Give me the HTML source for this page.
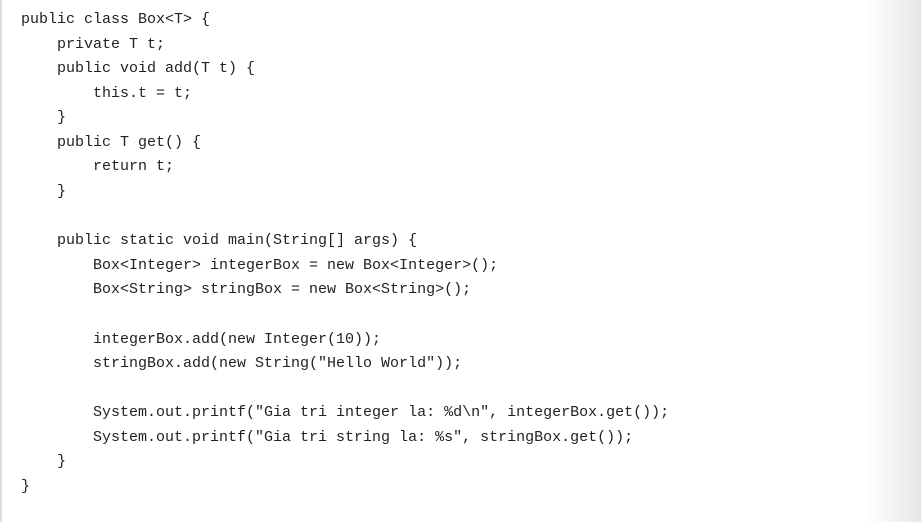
<!DOCTYPE html>
<html><head><style>
html,body{margin:0;padding:0;width:921px;height:522px;overflow:hidden;background:#fff;}
.wrap{position:absolute;left:0;top:0;width:921px;height:522px;background:linear-gradient(to right,#fff 0,#fff 865px,#f3f3f3 895px,#e6e6e6 921px);}
.bar{position:absolute;left:0;top:0;width:2px;height:522px;background:#ddd;}
pre{position:absolute;left:21px;top:8px;margin:0;font-family:"Liberation Mono",monospace;font-size:15px;line-height:24.58px;color:#222;}
</style></head><body><div class="wrap"><div class="bar"></div>
<pre>public class Box&lt;T&gt; {
    private T t;
    public void add(T t) {
        this.t = t;
    }
    public T get() {
        return t;
    }

    public static void main(String[] args) {
        Box&lt;Integer&gt; integerBox = new Box&lt;Integer&gt;();
        Box&lt;String&gt; stringBox = new Box&lt;String&gt;();

        integerBox.add(new Integer(10));
        stringBox.add(new String("Hello World"));

        System.out.printf("Gia tri integer la: %d\n", integerBox.get());
        System.out.printf("Gia tri string la: %s", stringBox.get());
    }
}</pre></div></body></html>
